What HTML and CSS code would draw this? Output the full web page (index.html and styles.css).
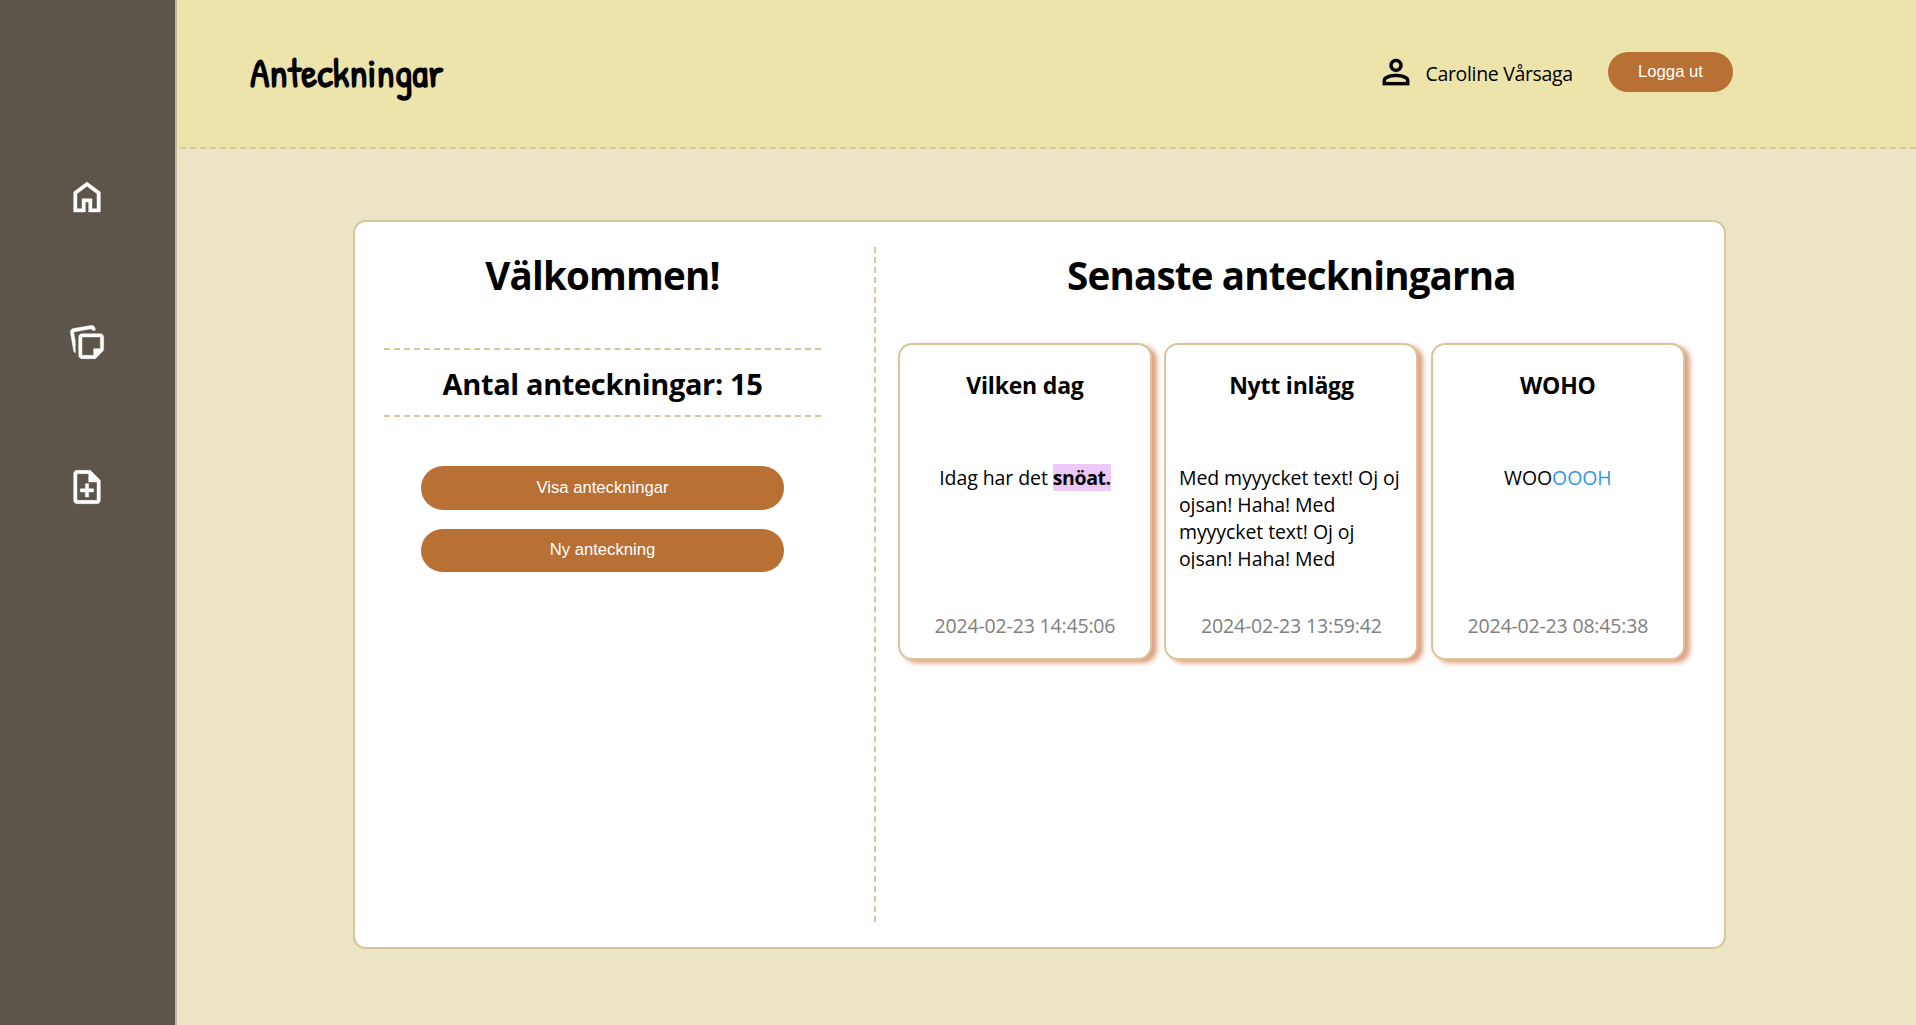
FILE: index.html
```html
<!DOCTYPE html>
<html lang="sv">
<head>
<meta charset="utf-8">
<title>Anteckningar</title>
<link rel="stylesheet" href="styles.css">
</head>
<body>
<div class="app">
  <header class="header">
    <div class="logo">Anteckningar</div>
    <div class="user">
      <svg class="icon" viewBox="0 -960 960 960"><path d="M480-480q-66 0-113-47t-47-113q0-66 47-113t113-47q66 0 113 47t47 113q0 66-47 113t-113 47ZM160-160v-112q0-34 17.500-62.500T224-378q62-31 126-46.500T480-440q66 0 130 15.500T736-378q29 15 46.500 43.500T800-272v112H160Zm80-80h480v-32q0-11-5.500-20T700-306q-54-27-109-40.500T480-360q-56 0-111 13.500T260-306q-9 5-14.500 14t-5.500 20v32Zm240-320q33 0 56.500-23.500T560-640q0-33-23.500-56.500T480-720q-33 0-56.500 23.500T400-640q0 33 23.500 56.500T480-560Z"/></svg>
      <span class="user-name">Caroline Vårsaga</span>
      <button class="btn btn-logout">Logga ut</button>
    </div>
  </header>
  <nav class="sidebar">
    <a class="nav-link"><svg class="icon" viewBox="0 -960 960 960"><path d="M240-200h120v-240h240v240h120v-360L480-740 240-560v360Zm-80 80v-480l320-240 320 240v480H520v-240h-80v240H160Z"/></svg></a>
    <a class="nav-link"><svg class="icon" viewBox="0 -960 960 960"><path d="M280-160v-441q0-33 24-56t57-23h439q33 0 56.500 23.500T880-600v320L680-80H360q-33 0-56.500-23.500T280-160ZM81-710q-6-33 13-59.500t52-32.500l434-77q33-6 59.500 13t32.500 52l10 54h-82l-7-40-433 77 40 226v279q-16-9-27.500-24T158-276L81-710Zm279 110v440h280v-160h160v-280H360Z"/></svg></a>
    <a class="nav-link"><svg class="icon" viewBox="0 -960 960 960"><path d="M440-240h80v-120h120v-80H520v-120h-80v120H320v80h120v120ZM240-80q-33 0-56.500-23.500T160-160v-640q0-33 23.500-56.500T240-880h320l240 240v480q0 33-23.500 56.500T720-80H240Zm280-520v-200H240v640h480v-440H520Z"/></svg></a>
  </nav>
  <main class="main">
    <div class="panel">
      <section class="welcome">
        <h1>Välkommen!</h1>
        <h2 class="count">Antal anteckningar: 15</h2>
        <div class="actions">
          <button class="btn">Visa anteckningar</button>
          <button class="btn">Ny anteckning</button>
        </div>
      </section>
      <section class="latest">
        <h1>Senaste anteckningarna</h1>
        <div class="notes">
          <article class="note">
            <h3>Vilken dag</h3>
            <div class="note-text"><p>Idag har det <strong class="mark">snöat.</strong></p></div>
            <time>2024-02-23 14:45:06</time>
          </article>
          <article class="note">
            <h3>Nytt inlägg</h3>
            <div class="note-text"><p>Med myyycket text! Oj oj ojsan! Haha! Med myyycket text! Oj oj ojsan! Haha! Med</p></div>
            <time>2024-02-23 13:59:42</time>
          </article>
          <article class="note">
            <h3>WOHO</h3>
            <div class="note-text"><p>WOO<span class="blue">OOOH</span></p></div>
            <time>2024-02-23 08:45:38</time>
          </article>
        </div>
      </section>
    </div>
  </main>
</div>
</body>
</html>
```
FILE: styles.css
```css
* {
  box-sizing: border-box;
}

body {
  margin: 0;
  background: #ebe5c6;
  color: #000;
  font-family: "Segoe UI", "Open Sans", sans-serif;
  font-size: 19.500px;
  line-height: 27px;
}

h1, h2, h3, p {
  margin: 0;
}

.app {
  display: grid;
  grid-template-columns: 177px 1fr;
  grid-template-rows: 149px 876px;
}

.header {
  grid-area: 1 / 1 / 2 / 3;
  display: flex;
  justify-content: space-between;
  align-items: center;
  padding: 0 183px 3px 250px;
  background: #ede4ac;
  border-bottom: 2px dashed #dbc49e;
}

.logo {
  padding-bottom: 1px;
  font-family: "Patrick Hand", "Open Sans", sans-serif;
  font-size: 40px;
  font-weight: 700;
  line-height: 50px;
}

.user {
  display: flex;
  align-items: center;
}

.user-name {
  width: 182.500px;
  margin-left: 10px;
  padding-top: 2px;
  letter-spacing: -0.330px;
}

.icon {
  display: block;
  width: 40px;
  height: 40px;
  fill: currentColor;
  stroke: currentColor;
  stroke-width: 4px;
}

.sidebar {
  grid-area: 1 / 1 / 3 / 2;
  z-index: 1;
  display: flex;
  flex-direction: column;
  align-items: center;
  gap: 104.800px;
  padding: 177px 1px 0 0;
  background: #5d5549;
  border-right: 2px solid #c1b8a2;
  color: #fff;
}

.sidebar .icon {
  stroke-width: 10px;
}

.main {
  grid-area: 2 / 2 / 3 / 3;
  padding: 71px 190px 0 176px;
}

.panel {
  display: grid;
  grid-template-columns: 521px 1fr;
  height: 729px;
  padding: 25px 0;
  background: #fff;
  border: 2px solid #d9c49c;
  border-radius: 13px;
}

h1 {
  height: 54px;
  padding-top: 1px;
  font-size: 38.500px;
  letter-spacing: -0.800px;
  line-height: 54px;
  text-align: center;
}

.welcome {
  padding: 0 53px 0 29px;
  border-right: 2px dashed #d9c49c;
}

.count {
  height: 69px;
  margin-top: 47px;
  padding-top: 1px;
  border: 2px dashed #d9c49c;
  border-width: 2px 0;
  font-size: 29px;
  letter-spacing: -0.360px;
  line-height: 65px;
  text-align: center;
}

.actions {
  display: flex;
  flex-direction: column;
  gap: 19px;
  padding: 49px 37px 0;
}

.btn {
  height: 43.600px;
  padding: 0;
  background: #b87034;
  border: 0;
  border-radius: 22px;
  color: #fff;
  font: 16.670px "Liberation Sans", Arial, sans-serif;
}

.btn-logout {
  width: 125px;
  height: 40px;
}

.latest {
  padding: 0 39.200px 0 22px;
}

.notes {
  display: grid;
  grid-template-columns: repeat(3, 1fr);
  gap: 12.500px;
  margin-top: 42px;
}

.note {
  display: flex;
  flex-direction: column;
  align-items: center;
  height: 317px;
  padding: 24px 12.500px 0;
  background: #fff;
  border: 2px solid #d9c49c;
  border-radius: 14px;
  box-shadow: 5px 3px 5px #dea182;
}

.note h3 {
  font-size: 23px;
  letter-spacing: -0.200px;
  line-height: 32px;
}

.note-text {
  height: 105px;
  margin-top: 63px;
  overflow: hidden;
  letter-spacing: -0.080px;
}

.note p {
  padding-top: 0.400px;
}

.note time {
  margin-top: 43px;
  letter-spacing: -0.170px;
  color: #808080;
}

.mark {
  background: #ecc9f8;
  letter-spacing: -0.400px;
}

.blue {
  color: #3598db;
}
```
